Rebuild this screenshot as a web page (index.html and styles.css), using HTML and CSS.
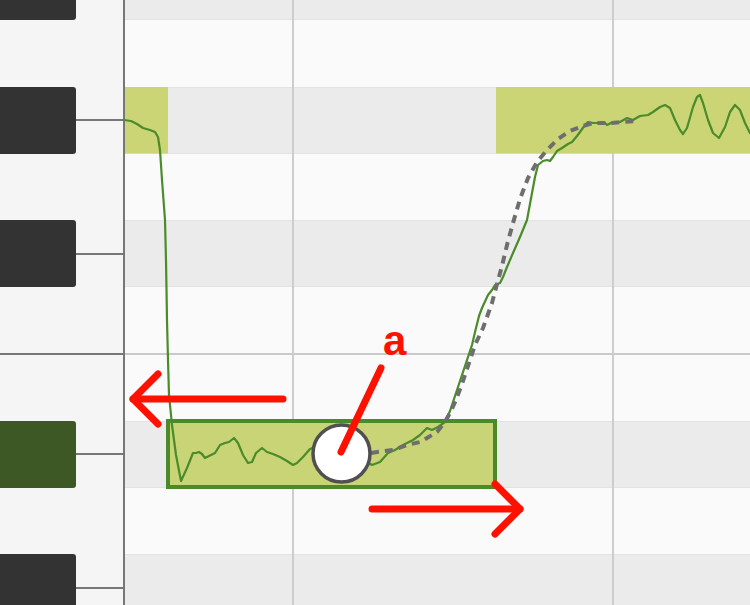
FILE: index.html
```html
<!DOCTYPE html>
<html>
<head>
<meta charset="utf-8">
<link rel="stylesheet" href="styles.css">
</head>
<body>
<div class="stage">
  <div class="roll">
    <div class="row dark"><div class="key"><div class="bk"></div></div><div class="lane"></div></div>
    <div class="row"><div class="key"></div><div class="lane"></div></div>
    <div class="row dark"><div class="key"><div class="bk"></div></div><div class="lane"></div></div>
    <div class="row"><div class="key"></div><div class="lane"></div></div>
    <div class="row dark"><div class="key"><div class="bk"></div></div><div class="lane"></div></div>
    <div class="row"><div class="key"></div><div class="lane"></div></div>
    <div class="row split"><div class="key"></div><div class="lane"></div></div>
    <div class="row dark"><div class="key"><div class="bk active"></div></div><div class="lane"></div></div>
    <div class="row"><div class="key"></div><div class="lane"></div></div>
    <div class="row dark"><div class="key"><div class="bk"></div></div><div class="lane"></div></div>
  </div>

  <svg class="overlay" width="750" height="605" viewBox="0 0 750 605" xmlns="http://www.w3.org/2000/svg">
    <g class="vlines">
      <rect x="292" y="0" width="2" height="605"/>
      <rect x="612" y="0" width="2" height="605"/>
    </g>
    <g class="notes">
      <rect x="125" y="87" width="43" height="66.5"/>
      <rect x="496" y="87" width="254" height="66.5"/>
      <rect class="selnote" x="168" y="421" width="327" height="66"/>
    </g>
    <polyline class="pitch" points="124,120 131,121 137,124 143,128 150,130 155,132 158,137 160,150 162,180 165,220 166,260 167,320 168,360 169,395 170,405 172,425 176,455 181,481 187,468 193,453 196,453 199,452 202,454 205,458 209,456 215,453 220,445 225,443 229,442 234,438 238,443 243,455 248,463 252,462 256,453 262,448 267,452 273,454 280,457 287,461 293,465 297,463 303,457 310,449 320,445 340,450 360,458 372,465 380,462 388,453 395,450 403,445 413,440 420,435 427,428 432,430 438,427 445,422 450,411 456,393 462,375 468,357 472,345 476,328 479,316 482,308 488,295 492,290 495,285 500,283 503,277 507,267 513,253 520,237 527,220 532,193 535,177 538,165 543,161 547,160 550,161 553,157 557,151 562,148 565,146 568,144 572,142 577,136 580,132 585,125 588,122 593,123 600,123 605,123 607,125 613,122 620,122 627,118 633,120 640,116 648,115 653,112 660,107 665,105 670,108 675,120 680,130 683,134 687,128 693,107 697,97 700,95 703,103 708,120 713,133 719,138 725,127 730,112 735,105 740,110 745,123 750,133"/>
    <polyline class="dash" points="371,453 377,452 393,450 407,445 420,442 427,438 437,432 445,422 450,413 456,400 462,384 468,366 475,345 483,328 492,303 497,284 502,266 507,245 513,223 520,199 528,178 537,162 547,150 558,139 570,131 583,126 593,123 603,123 612,123 622,122 637,121"/>
    <circle class="knob" cx="341.5" cy="453.5" r="28.5"/>
    <g class="red">
      <line x1="381" y1="368" x2="341" y2="452"/>
      <line x1="283" y1="399" x2="133" y2="399"/>
      <polyline points="158,374 133,399 158,424"/>
      <line x1="372" y1="509" x2="520" y2="509"/>
      <polyline points="495,484 520,509 495,534"/>
    </g>
  </svg>
  <span class="label">a</span>
</div>
</body>
</html>
```

FILE: styles.css
```css
html, body {
  margin: 0;
  padding: 0;
  background: #fafafa;
  font-family: "Liberation Sans", Arial, sans-serif;
}

.stage {
  position: relative;
  width: 750px;
  height: 605px;
  overflow: hidden;
}

.roll {
  display: flex;
  flex-direction: column;
  margin-top: -46.8px;
}

.row {
  display: flex;
  height: 66.8px;
  flex: none;
}

.key {
  position: relative;
  width: 123px;
  flex: none;
  background: #f5f5f5;
  border-right: 2px solid #777777;
}

.lane {
  position: relative;
  flex: 1;
  background: #fafafa;
}

.row.dark .lane {
  background: #ebebeb;
  box-shadow: inset 0 1px 0 #e3e3e3, inset 0 -1px 0 #e3e3e3;
}

.bk {
  width: 76px;
  height: 100%;
  background: #333333;
  border-radius: 0 3px 3px 0;
}

.bk.active {
  background: #3d5824;
}

.row.dark .key::after {
  content: "";
  position: absolute;
  left: 76px;
  right: 0;
  top: calc(50% - 1px);
  height: 2px;
  background: #777777;
}

.row.split .key::before,
.row.split .lane::before {
  content: "";
  position: absolute;
  left: 0;
  right: 0;
  top: -1px;
  height: 2px;
}

.row.split .key::before {
  background: #777777;
  right: -2px;
}

.row.split .lane::before {
  background: #c9c9c9;
}

.overlay {
  position: absolute;
  left: 0;
  top: 0;
  pointer-events: none;
}

.vlines rect {
  fill: #cdcdcd;
}

.notes rect {
  fill: #cbd576;
}

.notes .selnote {
  fill: #c9d476;
  stroke: #4b8a29;
  stroke-width: 4;
}

.pitch {
  fill: none;
  stroke: #4a8b2a;
  stroke-width: 2.2;
  stroke-linejoin: round;
  stroke-linecap: round;
}

.dash {
  fill: none;
  stroke: #6e6e6e;
  stroke-width: 4;
  stroke-dasharray: 8 6;
}

.knob {
  fill: #ffffff;
  stroke: #505050;
  stroke-width: 3.5;
}

.red line,
.red polyline {
  fill: none;
  stroke: #ff1100;
  stroke-width: 7;
  stroke-linecap: round;
  stroke-linejoin: round;
}

.label {
  position: absolute;
  left: 383px;
  top: 320px;
  font-family: "Liberation Sans", Arial, sans-serif;
  font-weight: bold;
  font-size: 42px;
  line-height: 42px;
  color: #ff1100;
}
```
